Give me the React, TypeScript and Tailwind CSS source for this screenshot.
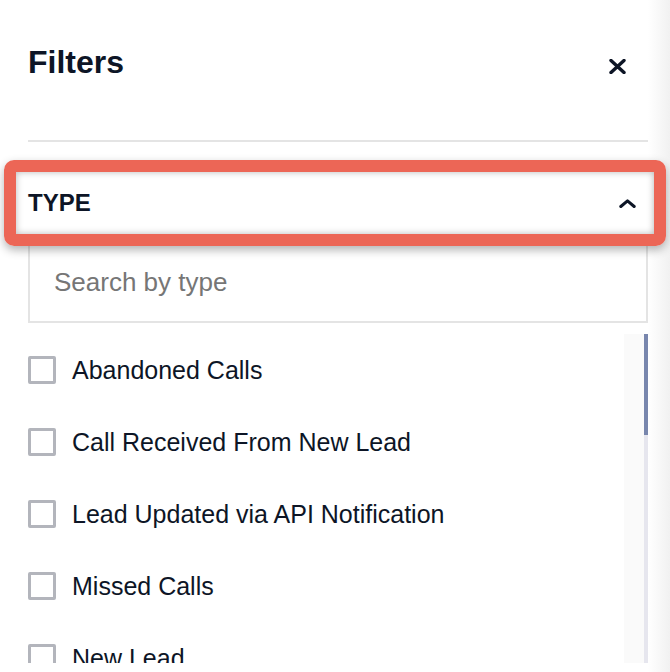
import React from "react";

const types = [
  "Abandoned Calls",
  "Call Received From New Lead",
  "Lead Updated via API Notification",
  "Missed Calls",
  "New Lead",
];

const App: React.FC = () => {
  return (
    <div className="flex h-[672px] flex-col overflow-hidden bg-[linear-gradient(to_right,#ffffff_648px,#f1f1f1)] font-['Liberation_Sans',Arial,sans-serif] text-[#0d1526]">
      {/* header */}
      <div className="flex items-start justify-between pl-[28px] pr-[44px] pt-[46px]">
        <h2 className="h-[32px] text-[32px] font-bold leading-none">Filters</h2>
        <svg width="17" height="15" viewBox="0 0 17 15" className="mt-[13px]">
          <path
            d="M2 1.5 L15 13.5 M15 1.5 L2 13.5"
            stroke="#0d1526"
            strokeWidth="3.4"
            strokeLinecap="round"
          />
        </svg>
      </div>

      <div className="ml-[28px] mr-[22px] mt-[62px] h-[2px] bg-[#e4e4e4]" />

      {/* type section header, highlighted */}
      <div className="relative z-10 mx-[16px] mt-[30px] flex h-[62px] items-center justify-between pl-[12px] pr-[18px]">
        <span className="text-[24px] font-bold leading-none">TYPE</span>
        <svg width="17" height="9" viewBox="0 0 17 9">
          <path
            d="M1.8 7.5 L8.5 1.8 L15.2 7.5"
            fill="none"
            stroke="#0d1526"
            strokeWidth="3"
            strokeLinecap="round"
            strokeLinejoin="round"
          />
        </svg>
        <div className="pointer-events-none absolute -inset-[12px] rounded-[10px] border-[12px] border-[#ec6656] shadow-[0_4px_10px_rgba(0,0,0,0.3),inset_0_0_7px_rgba(0,0,0,0.28)]" />
      </div>

      {/* search */}
      <div className="ml-[28px] mr-[22px] mt-[6px] flex h-[83px] items-center border-2 border-[#e4e4e4] pl-[24px]">
        <span className="text-[26px] leading-none text-[#767676]">Search by type</span>
      </div>

      {/* list */}
      <div className="ml-[28px] mr-[22px] mt-[11px] flex h-[329px] overflow-hidden">
        <div className="flex-1">
          {types.map((t) => (
            <label key={t} className="flex h-[72px] items-center gap-[16px]">
              <span className="h-[28px] w-[28px] shrink-0 rounded-[2px] border-[3px] border-[#b3b5bc]" />
              <span className="text-[25px] leading-none">{t}</span>
            </label>
          ))}
        </div>
        <div className="flex w-[24px] justify-end bg-[#fafafa]">
          <div className="w-[4px] bg-[#e6e6ee]">
            <div className="h-[101px] bg-[#7886ad]" />
          </div>
        </div>
      </div>
    </div>
  );
};

export default App;
